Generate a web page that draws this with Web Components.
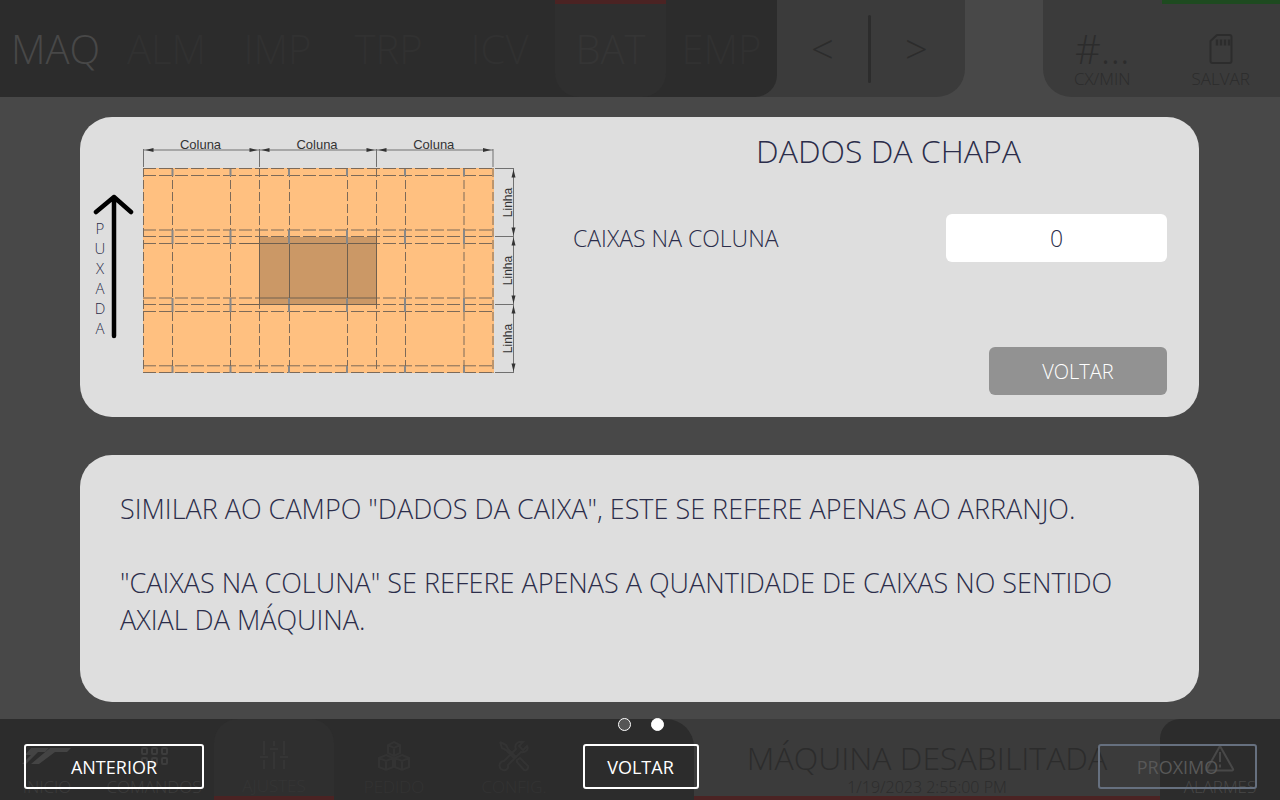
<!DOCTYPE html>
<html lang="pt-BR">
<head>
<meta charset="utf-8">
<meta name="viewport" content="width=device-width, initial-scale=1">
<title>Dados da chapa</title>
<style>
  body { margin: 0; background: #484848; font-family: "Open Sans", sans-serif; font-weight: 300; }
</style>
</head>
<body>
<hmi-screen>
  <machine-header slot="machine"></machine-header>
  <machine-footer slot="machine"></machine-footer>
  <help-overlay slot="overlay"></help-overlay>
</hmi-screen>

<script>
const define = (name, html) => customElements.define(name, class extends HTMLElement {
  constructor() {
    super();
    const t = document.createElement('template');
    t.innerHTML = html;
    this.attachShadow({ mode: 'open' }).append(t.content.cloneNode(true));
  }
});

/* Two layers in one grid cell: the dimmed machine page and the help on top. */
define('hmi-screen', `
<style>
  :host { display: grid; min-height: 100vh; background: #484848; }
  .layer { grid-area: 1 / 1; display: flex; flex-direction: column; min-width: 0; }
  .machine { justify-content: space-between; }
</style>
<div class="layer machine"><slot name="machine"></slot></div>
<div class="layer"><slot name="overlay"></slot></div>`);

define('machine-header', `
<style>
  :host { display: grid; grid-template-columns: 965fr 78fr 237fr; height: 97px; }
  button { font: inherit; color: inherit; background: none; border: 0; padding: 0; margin: 0; }
  .left { display: grid; grid-template-columns: 777fr 188fr; background: #3b3b3b; border-radius: 0 0 28px 0; overflow: hidden; }
  nav { display: grid; grid-template-columns: repeat(7, 1fr); background: #2c2c2c; border-radius: 0 0 22px 0; font-size: 40px; color: #313131; }
  nav button { white-space: nowrap; }
  .here { color: #484848; }
  .alert { background: #2f2f2f; color: #353535; border-top: 4px solid #4b2323; border-radius: 0 0 24px 24px; padding: 0 0 4px; }
  .pager { display: grid; grid-template-columns: 1fr 3px 1fr; align-items: center; padding-right: 3px; font-size: 40px; color: #2c2c2c; }
  .bar { height: 68px; background: #2c2c2c; border-radius: 2px; }
  .right { grid-column: 3; display: grid; grid-template-columns: 1fr 1fr; background: #3b3b3b; border-radius: 0 0 0 28px; color: #2c2c2c; overflow: hidden; }
  .cell { display: flex; flex-direction: column; align-items: center; justify-content: flex-end; font-size: 17px; line-height: 20px; padding-bottom: 8px; }
  .count { font-size: 40px; line-height: 40px; }
  .save { border-top: 4px solid #1e4a20; }
  .save svg { margin-bottom: 5px; }
</style>
<div class="left">
  <nav aria-label="Módulos">
    <button class="here">MAQ</button><button>ALM</button><button>IMP</button><button>TRP</button><button>ICV</button><button class="alert">BAT</button><button>EMP</button>
  </nav>
  <div class="pager"><button>&lt;</button><span class="bar"></span><button>&gt;</button></div>
</div>
<div class="right">
  <div class="cell"><span class="count">#...</span><span>CX/MIN</span></div>
  <button class="cell save">
    <svg width="24" height="30" viewBox="0 0 24 30" fill="none" stroke="#2c2c2c" stroke-width="2"><path d="M8 1h12.500a2 2 0 0 1 2 2v24a2 2 0 0 1-2 2H3.500a2 2 0 0 1-2-2V7z" stroke-linejoin="round"/><path d="M8 5.500v6M12 5.500v6M16 5.500v6M20 5.500v6" stroke-width="2.500"/></svg>
    <span>SALVAR</span>
  </button>
</div>`);

define('machine-footer', `
<style>
  :host { display: grid; grid-template-columns: 694fr 466fr 120fr; height: 81px; background: #3b3b3b; font-size: 17px; }
  button { font: inherit; color: inherit; background: none; border: 0; padding: 0; margin: 0; }
  .menu { display: grid; grid-template-columns: 94fr 120fr 120fr 120fr 120fr 120fr; background: #2c2c2c; border-radius: 0 28px 0 0; color: #353535; }
  .item { display: flex; flex-direction: column; align-items: center; justify-content: flex-end; gap: 5px; line-height: 20px; padding-bottom: 3px; min-width: 0; }
  .item svg { fill: none; stroke: currentColor; stroke-width: 2; }
  .bright { color: #3d3d3d; }
  .logo { margin-bottom: 6px; }
  .on { background: #2f2f2f; border-bottom: 4px solid #4b2323; border-radius: 24px 24px 0 0; padding-bottom: 0; }
  .off { color: #333; }
  .status { display: flex; flex-direction: column; align-items: center; justify-content: flex-end; border-bottom: 4px solid #4b2323; color: #2c2c2c; white-space: nowrap; }
  .state { font-size: 32px; line-height: 40px; }
  .time { font-size: 16px; line-height: 18px; }
  .alarm { background: #2c2c2c; border-radius: 20px 0 0 0; color: #484848; }
</style>
<nav class="menu" aria-label="Menu">
  <button class="item bright"><svg class="logo" width="50" height="20" viewBox="0 0 50 20"><path d="M9 2h18l-4 4h-7L4 18H0l9-9H3zM28 2h21l-4 4H33L17 18H9z" fill="#444" stroke="none"/></svg>INICIO</button>
  <button class="item bright"><svg width="28" height="28" viewBox="0 0 28 28"><rect x="2" y="4" width="5" height="6" rx="1"/><rect x="12" y="4" width="5" height="6" rx="1"/><rect x="22" y="4" width="5" height="6" rx="1"/><rect x="2" y="14" width="5" height="6" rx="1"/><rect x="12" y="14" width="5" height="6" rx="1"/><rect x="22" y="14" width="5" height="6" rx="1"/></svg>COMANDOS</button>
  <button class="item on"><svg width="32" height="32" viewBox="0 0 32 32"><path d="M6 2v14M6 21v9M2 18h8M16 2v5M16 13v17M12 10h8M26 2v14M26 21v9M22 18h8"/></svg>AJUSTES</button>
  <button class="item off"><svg width="32" height="32" viewBox="0 0 32 32"><path d="M16 2l6 3v8l-6 3-6-3V5zM10 5l6 3 6-3M16 8v8M8 15l7 3v9l-7 3-7-3v-9zM1 18l7 3 7-3M8 21v9M24 15l7 3v9l-7 3-7-3v-9zM17 18l7 3 7-3M24 21v9"/></svg>PEDIDO</button>
  <button class="item off"><svg width="32" height="32" viewBox="0 0 32 32"><path d="M2 2l6 3 2 4 8 8M2 2l2 6 4 2 8 8M29 6l-4 4-4-4 4-4c-6-1-9 3-7 7L6 21c-4 0-6 5-3 8 4 3 8 0 7-4l13-13c4 1 8-2 6-6zM19 20l3-2 8 8c1 3-2 5-4 4l-7-8z"/></svg>CONFIG.</button>
</nav>
<div class="status"><span class="state">MÁQUINA DESABILITADA</span><span class="time">1/19/2023 2:55:00 PM</span></div>
<button class="item alarm"><svg width="30" height="28" viewBox="0 0 30 28"><path d="M15 2L28 25a1 1 0 0 1-1 1.500H3A1 1 0 0 1 2 25z" stroke-linejoin="round"/><path d="M15 8v10M15 20.500v3"/></svg>ALARMES</button>`);

define('help-overlay', `
<style>
  :host { display: flex; flex-direction: column; flex: 1; padding-top: 117px; }
  .cards { display: grid; gap: 38px; padding: 0 81px 0 80px; }
  footer { display: grid; justify-items: center; gap: 13px; padding: 16px 23px 10px 24px; }
  .buttons { display: grid; grid-template-columns: 1fr auto 1fr; width: 100%; align-items: center; }
  .next { justify-self: end; }
</style>
<div class="cards">
  <help-card>
    <sheet-form><sheet-diagram></sheet-diagram></sheet-form>
  </help-card>
  <help-text></help-text>
</div>
<footer>
  <page-dots></page-dots>
  <div class="buttons">
    <help-button style="--w:180px">ANTERIOR</help-button>
    <help-button style="--w:116px">VOLTAR</help-button>
    <help-button class="next" style="--w:159px;--edge:#66707f;--ink:#585858">PROXIMO</help-button>
  </div>
</footer>`);

define('help-card', `
<style>
  :host { display: block; background: #dedede; border-radius: 32px; overflow: hidden; }
</style>
<slot></slot>`);

define('sheet-form', `
<style>
  :host { display: grid; grid-template-columns: 490px 1fr; min-height: 300px; color: #2b2d4a; }
  .form { display: flex; flex-direction: column; padding-bottom: 22px; }
  h1 { margin: 0; padding: 12px 0 0 8px; font-size: 32px; line-height: 44px; font-weight: 300; text-align: center; }
  .field { display: flex; justify-content: space-between; align-items: center; margin: 41px 32px 0 3px; font-size: 23px; }
  input { box-sizing: border-box; width: 221px; height: 48px; border: 0; border-radius: 6px; background: #fff; padding: 0; text-align: center; font: inherit; color: inherit; }
  button { align-self: flex-end; margin: auto 32px 0 0; width: 178px; height: 48px; border: 0; border-radius: 6px; background: #929292; color: #fff; font: inherit; font-size: 20px; }
</style>
<slot></slot>
<div class="form">
  <h1>DADOS DA CHAPA</h1>
  <div class="field"><label for="n">CAIXAS NA COLUNA</label><input id="n" type="text" value="0"></div>
  <button>VOLTAR</button>
</div>`);

/* Sheet layout drawing: 3 columns by 3 rows of boxes with their dimensions. */
customElements.define('sheet-diagram', class extends HTMLElement {
  constructor() {
    super();
    const cols = [143.5, 172.5, 230.5, 259.5, 289.5, 347.5, 376.5, 405.5, 464, 493];
    const rows = [168.5, 175.5, 230, 236.5, 243.5, 298, 304.5, 311.5, 365.8, 372.5];
    let s = '';
    rows.forEach(y => s += `<path class="dash" d="M143 ${y}H494"/>`);
    cols.forEach(x => s += `<path class="dash v" d="M${x} 168V373"/>`);
    for (const x of [172.5, 230.5, 289, 347, 405, 464])
      for (const [a, b] of [[169, 176], [230, 244], [298, 312], [366, 373]])
        s += `<path class="slot" d="M${x} ${a}V${b}"/>`;
    const cx = [143.5, 259.5, 376.5, 493], ry = [168.5, 236.5, 304.5, 372.5];
    cx.forEach(x => s += `<path class="dim" d="M${x} 149V167"/>`);
    ry.forEach(y => s += `<path class="dim" d="M495 ${y}H514"/>`);
    for (let i = 0; i < 3; i++) {
      const a = cx[i], b = cx[i + 1], c = ry[i], d = ry[i + 1];
      s += `<path class="dim" d="M${a} 150H${b}M513.500 ${c}V${d}"/>
        <path fill="#333" d="M${a + 2} 150l8-2v4zM${b - 2} 150l-8-2v4zM513.500 ${c + 1}l-2 8h4zM513.500 ${d - 1}l-2-8h4z"/>
        <text class="lab" x="${(a + b) / 2 - 1}" y="149" font-size="13">Coluna</text>
        <text class="lab" transform="translate(512 ${(c + d) / 2}) rotate(-90)" font-size="12">Linha</text>`;
    }
    [...'PUXADA'].forEach((l, i) => s += `<text class="pull" x="100" y="${234 + i * 20}">${l}</text>`);
    this.attachShadow({ mode: 'open' }).innerHTML = `
<style>
  :host { display: block; padding: 18px 10px 0; }
  svg { display: block; }
  .dash { stroke: #7d6a58; stroke-dasharray: 13 3; fill: none; }
  .v { stroke-dasharray: 9 3; }
  .slot { stroke: #888; stroke-width: 2; }
  .dim { stroke: #707070; fill: none; }
  .lab { font-family: "Liberation Sans", Arial, sans-serif; font-weight: 400; fill: #333; text-anchor: middle; }
  .pull { font-size: 15px; text-anchor: middle; fill: #2b2d4a; }
</style>
<svg width="430" height="242" viewBox="90 135 430 242" role="img" aria-label="Arranjo da chapa">
  <rect x="143" y="168" width="351" height="205" fill="#ffc080"/>
  <g>${s}</g>
  <rect x="259" y="237" width="118" height="67" fill="#cb9866"/>
  <path d="M240 243.500H377M240 304.500H377M259.500 237V305M376.500 237V305M289.500 237V304M347.500 237V304M259 298H377" stroke="#70604f" fill="none"/>
  <path class="slot" d="M289 237V244M347 237V244M289 298V304M347 298V304"/>
  <path d="M114 197V336M96 212l18-15 17 15" fill="none" stroke="#000" stroke-width="4.500" stroke-linecap="round" stroke-linejoin="round"/>
</svg>`;
  }
});

define('help-text', `
<style>
  :host { display: block; box-sizing: border-box; min-height: 247px; background: #dedede; border-radius: 32px; padding: 35px 40px; color: #2b2d4a; font-size: 27px; line-height: 37px; }
  p { margin: 0 0 37px; }
  p:last-child { margin: 0; }
</style>
<p>SIMILAR AO CAMPO "DADOS DA CAIXA", ESTE SE REFERE APENAS AO ARRANJO.</p>
<p>"CAIXAS NA COLUNA" SE REFERE APENAS A QUANTIDADE DE CAIXAS NO SENTIDO AXIAL DA MÁQUINA.</p>`);

define('page-dots', `
<style>
  :host { display: flex; gap: 20px; }
  button { box-sizing: border-box; width: 13px; height: 13px; padding: 0; border: 1px solid #fff; border-radius: 50%; background: #555; }
  .on { background: #fff; }
</style>
<button aria-label="Página 1"></button><button class="on" aria-label="Página 2"></button>`);

define('help-button', `
<style>
  :host { display: block; }
  button { box-sizing: border-box; width: var(--w); height: 45px; padding: 0; background: none; border: 2px solid var(--edge, #fff); border-radius: 3px; color: var(--ink, #fff); font: inherit; font-weight: 400; font-size: 18px; }
</style>
<button><slot></slot></button>`);
</script>
</body>
</html>
